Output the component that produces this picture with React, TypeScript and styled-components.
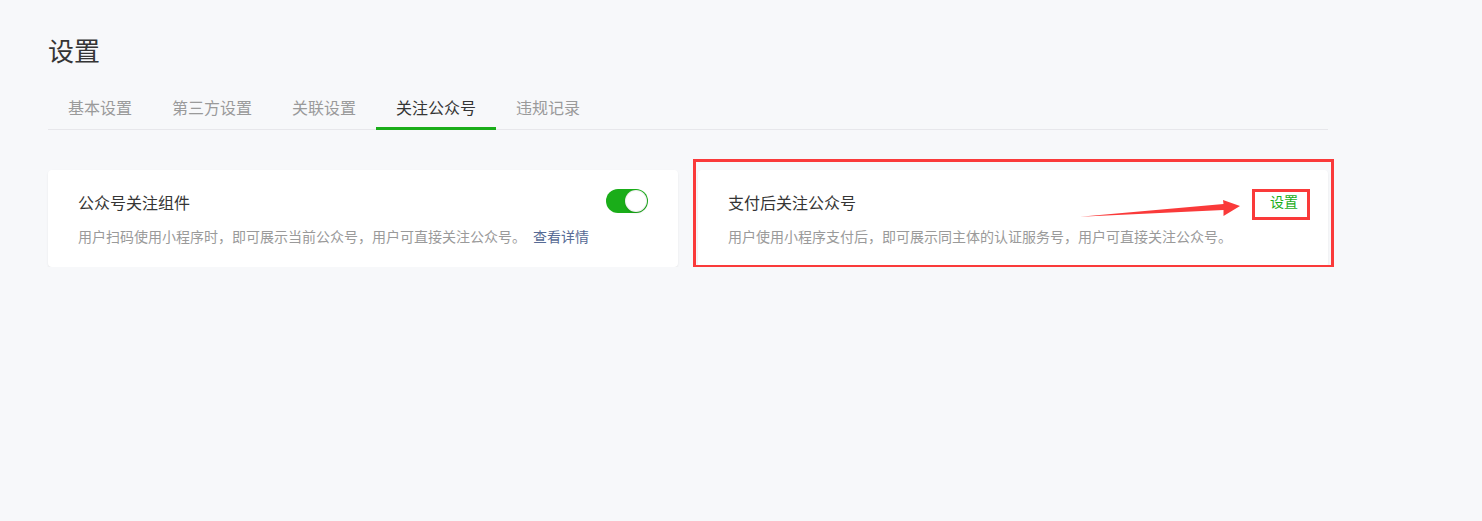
import React from 'react';
import styled, { createGlobalStyle } from 'styled-components';

const GlobalStyle = createGlobalStyle`
  html, body {
    margin: 0;
    padding: 0;
    background: #f7f8fa;
  }
  body {
    font-family: "Noto Sans CJK SC", "Liberation Sans", sans-serif;
    color: #353535;
  }
`;

const Page = styled.div`
  padding: 32px 48px 0;
  width: 1280px;
`;

const Title = styled.h2`
  margin: 0;
  height: 36px;
  line-height: 36px;
  font-size: 26px;
  font-weight: 400;
  color: #353535;
`;

const TabBar = styled.div`
  display: flex;
  margin-top: 21px;
  border-bottom: 1px solid #e7e7eb;
`;

const Tab = styled.div<{ active?: boolean }>`
  position: relative;
  padding: 0 20px 3px;
  height: 37px;
  line-height: 37px;
  font-size: 16px;
  color: ${p => (p.active ? '#353535' : '#9a9a9a')};
  cursor: pointer;
  &::after {
    content: '';
    display: ${p => (p.active ? 'block' : 'none')};
    position: absolute;
    left: 0;
    right: 0;
    bottom: -1px;
    height: 3px;
    background: #1aad19;
  }
`;

const CardRow = styled.div`
  display: grid;
  grid-template-columns: 630px 630px;
  gap: 20px;
  margin-top: 40px;
`;

const Card = styled.div`
  position: relative;
  height: 97px;
  box-sizing: border-box;
  padding: 21px 30px 0;
  background: #fff;
  border-radius: 4px;
  box-shadow: 0 1px 2px rgba(0, 0, 0, 0.08);
`;

const CardHead = styled.div`
  display: flex;
  align-items: center;
  justify-content: space-between;
  height: 22px;
`;

const CardTitle = styled.div`
  font-size: 16px;
  line-height: 22px;
  color: #353535;
`;

const Desc = styled.div`
  margin-top: 12px;
  font-size: 14px;
  line-height: 22px;
  color: #9a9a9a;
  white-space: nowrap;
`;

const DetailLink = styled.a`
  margin-left: 7px;
  color: #576b95;
  text-decoration: none;
`;

const Switch = styled.div<{ on?: boolean }>`
  position: relative;
  width: 42px;
  height: 24px;
  margin-top: -3px;
  border-radius: 12px;
  background: ${p => (p.on ? '#1aad19' : '#dfdfdf')};
  &::after {
    content: '';
    position: absolute;
    top: 1px;
    left: ${p => (p.on ? '19px' : '1px')};
    width: 20px;
    height: 20px;
    border-radius: 50%;
    background: #fff;
    border: 1px solid rgba(0, 0, 0, 0.06);
    box-shadow: 0 1px 2px rgba(0, 0, 0, 0.15);
  }
`;

const SetLink = styled.a`
  position: relative;
  margin-top: -3px;
  font-size: 14px;
  line-height: 20px;
  color: #1aad19;
  text-decoration: none;
`;

// 标注：红框和箭头
const MarkBox = styled.span<{ inset: string }>`
  position: absolute;
  inset: ${p => p.inset};
  border: 3px solid #fa3a3a;
  pointer-events: none;
`;

const Arrow = styled.svg`
  position: absolute;
  left: 380px;
  top: 26px;
  overflow: visible;
`;

const tabs = ['基本设置', '第三方设置', '关联设置', '关注公众号', '违规记录'];

const App = () => (
  <>
    <GlobalStyle />
    <Page>
      <Title>设置</Title>
      <TabBar>
        {tabs.map(t => (
          <Tab key={t} active={t === '关注公众号'}>{t}</Tab>
        ))}
      </TabBar>
      <CardRow>
        <Card>
          <CardHead>
            <CardTitle>公众号关注组件</CardTitle>
            <Switch on />
          </CardHead>
          <Desc>
            用户扫码使用小程序时，即可展示当前公众号，用户可直接关注公众号。
            <DetailLink href="#">查看详情</DetailLink>
          </Desc>
        </Card>
        <Card>
          <MarkBox inset="-11px -6px -1px -5px" />
          <CardHead>
            <CardTitle>支付后关注公众号</CardTitle>
            <SetLink href="#">
              设置
              <MarkBox inset="-2px -12px -9px -18px" />
            </SetLink>
          </CardHead>
          <Desc>用户使用小程序支付后，即可展示同主体的认证服务号，用户可直接关注公众号。</Desc>
          <Arrow width="164" height="24" viewBox="0 0 164 24">
            <polygon points="2,20.7 145.5,8 145,4 162,10 145.5,20 145.5,14" fill="#fa3a3a" />
          </Arrow>
        </Card>
      </CardRow>
    </Page>
  </>
);

export default App;
